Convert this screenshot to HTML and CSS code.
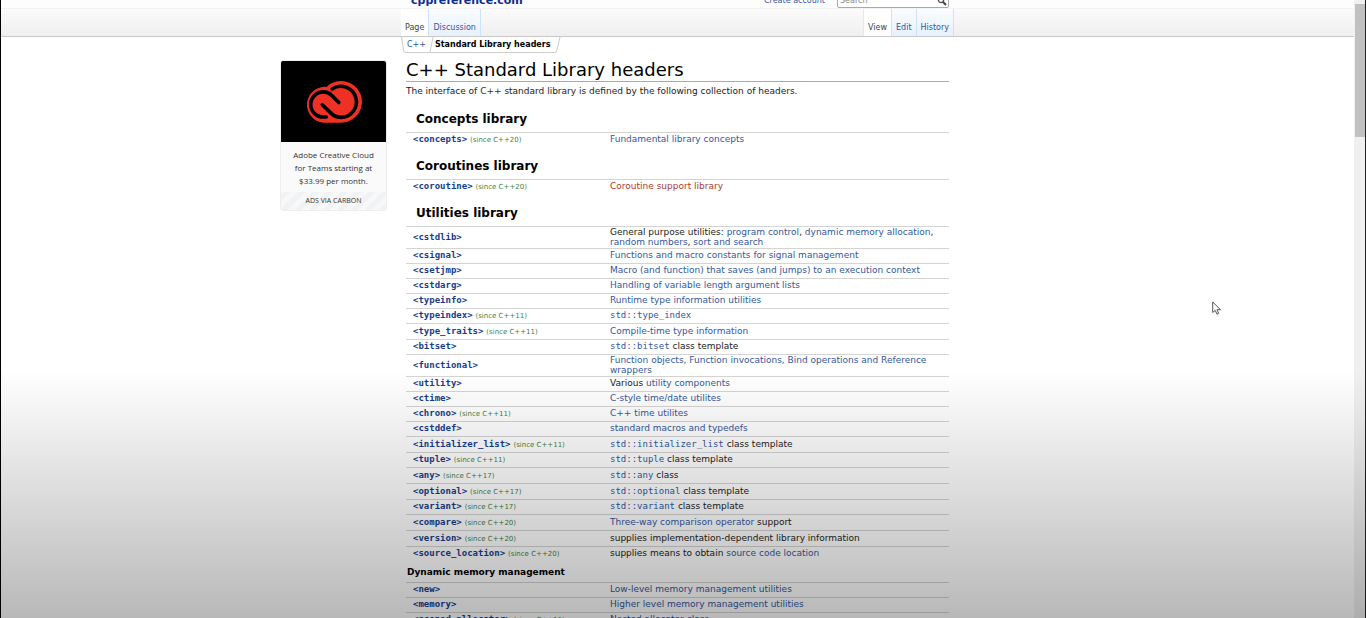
FILE: index.html
```
<!DOCTYPE html>
<html lang="en">
<head>
<meta charset="utf-8">
<title>C++ Standard Library headers - cppreference.com</title>
<link rel="stylesheet" href="styles.css">
</head>
<body>
<div class="page">
  <header class="top">
    <div class="inner top-inner">
      <a class="logo" href="#">cppreference.com</a>
      <a class="account" href="#">Create account</a>
      <div class="search">
        <input type="text" placeholder="Search" aria-label="Search">
        <svg width="10" height="10" viewBox="0 0 10 10" aria-hidden="true"><circle cx="4" cy="4" r="2.6" fill="none" stroke="#555" stroke-width="1.4"/><path d="M5.8 5.8L9 9" stroke="#444" stroke-width="2"/></svg>
      </div>
    </div>
  </header>
  <nav class="tabs">
    <div class="inner tabs-inner">
      <a class="tab on" href="#">Page</a><a class="tab" href="#">Discussion</a>
      <span class="gap"></span>
      <a class="tab on" href="#">View</a><a class="tab" href="#">Edit</a><a class="tab" href="#">History</a>
    </div>
  </nav>
  <div class="columns">
    <aside class="ad">
      <div class="ad-image">
        <svg width="58" height="42" viewBox="103 90 173 127" role="img" aria-label="Creative Cloud">
          <path fill="#ee3124" d="M157 216A54 54 0 1 1 167 108A63 63 0 1 1 212 216Z"/>
          <g fill="none" stroke="#000" stroke-width="11" stroke-linecap="round">
            <path d="M184 114A47 47 0 1 1 212 200C198 200 189 196 181 188L154 162"/>
            <path d="M166 199L157 199A38 38 0 1 1 157 123C167 123 176 127 183 134L204 155"/>
          </g>
        </svg>
      </div>
      <a class="ad-text" href="#">Adobe Creative Cloud<br>for Teams starting at<br>$33.99 per month.</a>
      <a class="ad-via" href="#">ADS VIA CARBON</a>
    </aside>
    <main class="content">
      <div class="crumbs">
        <svg class="crumb-frame" viewBox="0 0 160 16" preserveAspectRatio="none" aria-hidden="true"><path d="M.5 0L2.500 13Q3 15.500 5 15.500H153Q155.500 15.500 156 13L159 0M32 0L29 15" fill="none" stroke="#ccc"/></svg>
        <a href="#">C++</a><strong>Standard Library headers</strong>
      </div>
      <h1>C++ Standard Library headers</h1>
      <p>The interface of <a class="plain" href="#">C++</a> standard library is defined by the following collection of headers.</p>

      <h3>Concepts library</h3>
      <table>
        <tr><td><a href="#">&lt;concepts&gt;</a> <small>(since C++20)</small></td><td><a href="#">Fundamental library concepts</a></td></tr>
      </table>
      <h3>Coroutines library</h3>
      <table>
        <tr><td><a href="#">&lt;coroutine&gt;</a> <small>(since C++20)</small></td><td><a class="new" href="#">Coroutine support library</a></td></tr>
      </table>
      <h3>Utilities library</h3>
      <table>
        <tr class="double"><td><a href="#">&lt;cstdlib&gt;</a></td><td>General purpose utilities: <a href="#">program control</a>, <a href="#">dynamic memory allocation</a>, <a href="#">random numbers</a>, <a href="#">sort and search</a></td></tr>
        <tr><td><a href="#">&lt;csignal&gt;</a></td><td><a href="#">Functions and macro constants for signal management</a></td></tr>
        <tr><td><a href="#">&lt;csetjmp&gt;</a></td><td><a href="#">Macro (and function) that saves (and jumps) to an execution context</a></td></tr>
        <tr><td><a href="#">&lt;cstdarg&gt;</a></td><td><a href="#">Handling of variable length argument lists</a></td></tr>
        <tr><td><a href="#">&lt;typeinfo&gt;</a></td><td><a href="#">Runtime type information utilities</a></td></tr>
        <tr><td><a href="#">&lt;typeindex&gt;</a> <small>(since C++11)</small></td><td><a href="#"><code>std::type_index</code></a></td></tr>
        <tr class="tall"><td><a href="#">&lt;type_traits&gt;</a> <small>(since C++11)</small></td><td><a href="#">Compile-time type information</a></td></tr>
        <tr><td><a href="#">&lt;bitset&gt;</a></td><td><a href="#"><code>std::bitset</code></a> class template</td></tr>
        <tr class="double"><td><a href="#">&lt;functional&gt;</a></td><td><a href="#">Function objects, Function invocations, Bind operations and Reference wrappers</a></td></tr>
        <tr><td><a href="#">&lt;utility&gt;</a></td><td>Various <a href="#">utility components</a></td></tr>
        <tr><td><a href="#">&lt;ctime&gt;</a></td><td><a href="#">C-style time/date utilites</a></td></tr>
        <tr><td><a href="#">&lt;chrono&gt;</a> <small>(since C++11)</small></td><td><a href="#">C++ time utilites</a></td></tr>
        <tr><td><a href="#">&lt;cstddef&gt;</a></td><td><a href="#">standard macros and typedefs</a></td></tr>
        <tr class="tall"><td><a href="#">&lt;initializer_list&gt;</a> <small>(since C++11)</small></td><td><a href="#"><code>std::initializer_list</code></a> class template</td></tr>
        <tr><td><a href="#">&lt;tuple&gt;</a> <small>(since C++11)</small></td><td><a href="#"><code>std::tuple</code></a> class template</td></tr>
        <tr class="tall"><td><a href="#">&lt;any&gt;</a> <small>(since C++17)</small></td><td><a href="#"><code>std::any</code></a> class</td></tr>
        <tr class="tall"><td><a href="#">&lt;optional&gt;</a> <small>(since C++17)</small></td><td><a href="#"><code>std::optional</code></a> class template</td></tr>
        <tr><td><a href="#">&lt;variant&gt;</a> <small>(since C++17)</small></td><td><a href="#"><code>std::variant</code></a> class template</td></tr>
        <tr class="tall"><td><a href="#">&lt;compare&gt;</a> <small>(since C++20)</small></td><td><a href="#">Three-way comparison operator</a> support</td></tr>
        <tr class="tall"><td><a href="#">&lt;version&gt;</a> <small>(since C++20)</small></td><td>supplies implementation-dependent library information</td></tr>
        <tr><td><a href="#">&lt;source_location&gt;</a> <small>(since C++20)</small></td><td>supplies means to obtain <a href="#">source code location</a></td></tr>
      </table>
      <h5>Dynamic memory management</h5>
      <table>
        <tr><td><a href="#">&lt;new&gt;</a></td><td><a href="#">Low-level memory management utilities</a></td></tr>
        <tr><td><a href="#">&lt;memory&gt;</a></td><td><a href="#">Higher level memory management utilities</a></td></tr>
        <tr><td><a href="#">&lt;scoped_allocator&gt;</a> <small>(since C++11)</small></td><td><a href="#">Nested allocator class</a></td></tr>
      </table>
    </main>
  </div>
</div>
<div class="scrollbar"><div class="thumb"></div></div>
<svg class="pointer" width="10" height="15" viewBox="0 0 10 15" aria-hidden="true"><path d="M.7 1V11.500L3.200 9.300L5 13.200L6.700 12.400L5 8.700H8.500Z" fill="#fff" stroke="#555"/></svg>
<div class="shade"></div>
</body>
</html>
```
FILE: styles.css
```
* { box-sizing: border-box; }
body {
  margin: 0;
  height: 100vh;
  overflow: hidden;
  display: grid;
  grid-template-columns: 1fr 11px;
  border-left: 1px solid #000;
  border-right: 1px solid #222;
  background: #fff;
  color: #222;
  font: 9px/10px "DejaVu Sans", sans-serif;
}
a { color: #3358a0; text-decoration: none; }
.page { overflow: hidden; min-width: 0; }
.inner { max-width: 553px; margin: 0 auto; display: flex; }

.top { height: 9px; overflow: hidden; background: #fdfdfd; border-bottom: 1px solid #f3f3f3; }
.top-inner { height: 8px; align-items: flex-end; padding: 0 5px 0 10px; }
.logo { color: #0d2f8c; font-size: 11px; line-height: 14px; font-weight: bold; margin-right: auto; }
.account { font-size: 8px; line-height: 14px; margin-right: 12px; }
.search { display: flex; align-items: center; width: 112px; height: 14px; border: 1px solid #aaa; border-radius: 2px; background: #fff; padding-right: 1px; }
.search input { flex: 1; min-width: 0; border: 0; padding: 0 2px; background: none; font: 8px/12px "DejaVu Sans", sans-serif; }
.search input::placeholder { color: #888; }

.tabs { height: 28px; border-bottom: 1px solid #c8c8c8; background: linear-gradient(#fbfbfb, #efefef); }
.tabs-inner { height: 27px; }
.tab { padding: 14px 4px 0; font-size: 8px; border-right: 1px solid #cfe3f8; background: linear-gradient(#fafcff, #e6f1fd); }
.tab.on { background: #fff; color: #444; }
.gap { flex: 1; border-right: 1px solid #dcebfa; margin-left: -1px; }

.columns { display: grid; grid-template-columns: 1fr minmax(0, 553px) 1fr; }
.ad {
  justify-self: end;
  align-self: start;
  width: 107px;
  margin: 23px 14px 0 0;
  border: 1px solid #eee;
  border-radius: 3px;
  overflow: hidden;
  background: #fafafa;
  text-align: center;
  font-family: "Open Sans", sans-serif;
}
.ad-image { height: 81px; display: flex; align-items: center; justify-content: center; background: #000; }
.ad-text { display: block; padding: 6px 0 5px; font-size: 8px; line-height: 13px; color: #333; }
.ad-via {
  display: block;
  padding: 4px 0;
  color: #333;
  font-size: 7px;
  background: repeating-linear-gradient(-45deg, #f1f2f4 0 5px, #f8f8f8 5px 10px);
}

.content { padding: 0 5px; min-width: 0; }
.crumbs { position: relative; display: flex; gap: 9px; width: 160px; height: 16px; margin-left: -5px; padding: 3px 0 0 6px; font-size: 8px; white-space: nowrap; }
.crumbs strong { color: #000; }
.crumb-frame { position: absolute; left: 0; top: 0; width: 100%; height: 100%; }
h1 { margin: 5px 0 0; font-size: 18px; line-height: 23px; font-weight: normal; color: #000; border-bottom: 1px solid #aaa; }
p { margin: 0; padding: 4px 0; }
.plain { color: #333; }
h3 { margin: 0; padding: 11px 0 5px 10px; font-size: 12px; line-height: 16px; color: #000; }
h5 { margin: 0; padding: 6px 0 5px 1px; font-size: 9px; line-height: 10px; color: #000; }

table { width: 100%; border-spacing: 0; table-layout: fixed; }
td { height: 15px; padding: 0 0 2px; border-top: 1px solid #d4d4d4; vertical-align: middle; }
.tall td { height: 16px; }
.double td { height: 22px; padding-bottom: 1px; }
td:first-child { width: 204px; padding-left: 7px; white-space: nowrap; }
td:first-child a { font-family: "DejaVu Sans Mono", monospace; font-weight: bold; color: #173c8c; }
code { font: 9px/10px "DejaVu Sans Mono", monospace; }
small { font-size: 7px; line-height: 8px; color: #3f7f3f; }
.new { color: #b03a30; }

.scrollbar { background: #f0f0f0; padding: 4px 0 0 1px; }
.thumb { height: 133px; background: #c1c1c1; }
.pointer { position: absolute; left: 1212px; top: 301px; }
.shade { position: absolute; inset: auto 0 0; height: 40vh; background: linear-gradient(transparent, rgba(0, 0, 0, .28)); pointer-events: none; }
```
